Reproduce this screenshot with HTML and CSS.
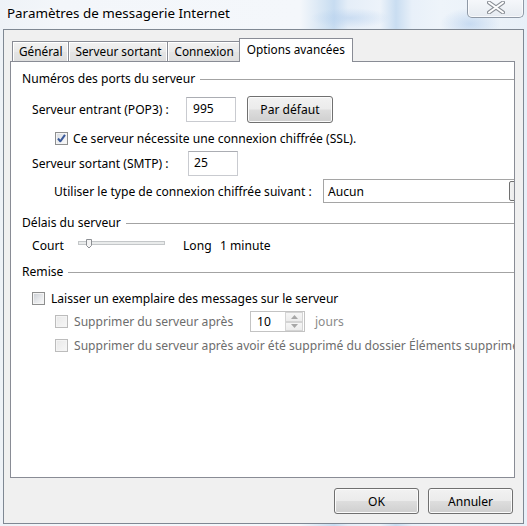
FILE: index.html
```html
<!DOCTYPE html>
<html lang="fr">
<head>
<meta charset="utf-8">
<title>Paramètres de messagerie Internet</title>
<link rel="stylesheet" href="styles.css">
</head>
<body>
<div class="window">
  <div class="titlebar">
    <span class="title">Paramètres de messagerie Internet</span>
    <div class="close">
      <svg width="18" height="13" viewBox="0 0 18 13">
        <path d="M2 1.5 L16 11.5 M16 1.5 L2 11.5" stroke="#8a8f96" stroke-width="4" stroke-linecap="round" fill="none"/>
        <path d="M2 1.5 L16 11.5 M16 1.5 L2 11.5" stroke="#ffffff" stroke-width="2" stroke-linecap="round" fill="none"/>
      </svg>
    </div>
  </div>
  <div class="dialog">
    <div class="tabs">
      <div class="tab">Général</div>
      <div class="tab">Serveur sortant</div>
      <div class="tab">Connexion</div>
      <div class="tab active">Options avancées</div>
    </div>
    <div class="panel">
      <div class="group-head"><span>Numéros des ports du serveur</span><span class="rule"></span></div>
      <div class="row row-pop">
        <span class="lbl lbl-pop">Serveur entrant (POP3) :</span>
        <span class="field field-pop">995</span>
        <span class="btn btn-default">Par défaut</span>
      </div>
      <div class="row row-ssl">
        <span class="check checked">
          <svg width="11" height="11" viewBox="0 0 11 11"><path d="M2 5.5 L4.3 8.3 L9 1.8" stroke="#3b5a9a" stroke-width="2" fill="none" stroke-linejoin="round"/></svg>
        </span>
        <span class="check-text">Ce serveur nécessite une connexion chiffrée (SSL).</span>
      </div>
      <div class="row row-smtp">
        <span class="lbl lbl-smtp">Serveur sortant (SMTP) :</span>
        <span class="field field-smtp">25</span>
      </div>
      <div class="row row-enc">
        <span class="lbl lbl-enc">Utiliser le type de connexion chiffrée suivant :</span>
        <span class="combo"><span class="combo-text">Aucun</span><span class="combo-btn"></span></span>
      </div>
      <div class="group-head head-delay"><span>Délais du serveur</span><span class="rule"></span></div>
      <div class="row row-slider">
        <span class="lbl lbl-court">Court</span>
        <svg class="slider" width="88" height="10" viewBox="0 0 88 10">
          <rect x="0.5" y="2.5" width="86" height="3" fill="#e9ebeb" stroke="#c4c7c9"/>
          <path d="M8.5 0.5 H13.5 V6.5 L11 9 L8.5 6.5 Z" fill="#f4f4f4" stroke="#8c8f93"/>
        </svg>
        <span class="lbl lbl-long">Long</span>
        <span class="lbl">1 minute</span>
      </div>
      <div class="group-head head-remise"><span>Remise</span><span class="rule"></span></div>
      <div class="row row-keep">
        <span class="check"></span>
        <span class="check-text keep-text">Laisser un exemplaire des messages sur le serveur</span>
      </div>
      <div class="row row-del1">
        <span class="check disabled"></span>
        <span class="check-text dis-text del-text">Supprimer du serveur après</span>
        <span class="spin">
          <span class="spin-text">10</span>
          <span class="spin-btns">
            <span class="spin-btn"><svg width="7" height="4" viewBox="0 0 7 4"><path d="M0 4 L3.5 0 L7 4 Z" fill="#a7a7a7"/></svg></span>
            <span class="spin-btn"><svg width="7" height="4" viewBox="0 0 7 4"><path d="M0 0 L3.5 4 L7 0 Z" fill="#a7a7a7"/></svg></span>
          </span>
        </span>
        <span class="dis-text jours">jours</span>
      </div>
      <div class="row row-del2">
        <span class="check disabled"></span>
        <span class="check-text dis-text del-text">Supprimer du serveur après avoir été supprimé du dossier Éléments supprimés</span>
      </div>
    </div>
    <div class="buttons">
      <span class="btn btn-ok">OK</span>
      <span class="btn btn-cancel">Annuler</span>
    </div>
  </div>
</div>
</body>
</html>
```
FILE: styles.css
```css
* { box-sizing: border-box; }
html, body { margin: 0; padding: 0; }
body {
  width: 527px;
  height: 526px;
  overflow: hidden;
  font-family: "Noto Sans", "Open Sans", sans-serif;
  font-size: 12.1px;
  color: #000;
  background:
    radial-gradient(ellipse 30px 16px at 470px 24px, rgba(170,200,235,0.55), rgba(170,200,235,0) 100%),
    radial-gradient(ellipse 40px 10px at 350px 18px, rgba(170,200,235,0.45), rgba(170,200,235,0) 100%),
    linear-gradient(to right,
      #eef2f7 0px, #f3f6fa 60px, #f4f7fb 300px,
      #d2e3f3 326px, #c7dcf1 334px, #e5eef8 348px,
      #edf3fa 380px, #c9ddf1 396px, #e8f0f9 412px,
      #eef4fa 440px, #e8f0f8 527px);
}
.window {
  width: 527px;
  height: 526px;
  display: flex;
  flex-direction: column;
  padding: 0 3px 2px 3px;
}
.titlebar {
  height: 29px;
  flex: none;
  display: flex;
  justify-content: space-between;
  align-items: flex-start;
}
.title {
  font-size: 13.4px;
  line-height: 18px;
  padding: 4px 0 0 4px;
  color: #000;
  text-shadow: 0 0 6px #fff, 0 0 3px #fff;
}
.close {
  width: 57px;
  height: 19px;
  margin-top: -1px;
  border: 1px solid #8f99a6;
  border-top: none;
  border-radius: 0 0 5px 5px;
  background: linear-gradient(#f6f8fb, #e6ebf1);
  box-shadow: inset 0 0 0 1px rgba(255,255,255,0.7);
  display: flex;
  align-items: center;
  justify-content: center;
  padding-bottom: 1px;
}
.dialog {
  flex: 1;
  border: 1px solid #7f8893;
  background: #f0f0f0;
  display: flex;
  flex-direction: column;
  padding: 8px 8px 0 6px;
}
.tabs {
  height: 24px;
  margin-bottom: -1px;
  padding-left: 2px;
  display: flex;
  align-items: flex-end;
  font-size: 11.8px;
}
.tab {
  height: 21px;
  padding: 0 6px;
  line-height: 19px;
  border: 1px solid #898c95;
  border-bottom: none;
  margin-left: -1px;
  background: linear-gradient(#f2f2f2, #e9e9e9 50%, #e4e4e4 51%, #dedede);
  box-shadow: inset 1px 1px 0 #fff, inset -1px 0 0 #fff;
  color: #000;
  white-space: nowrap;
}
.tab:first-child { margin-left: 0; }
.tab.active {
  height: 24px;
  line-height: 20px;
  padding: 0 7px;
  margin-left: -2px;
  background: #fff;
  box-shadow: none;
  z-index: 1;
}
.panel {
  height: 417px;
  flex: none;
  border: 1px solid #898c95;
  background: #fff;
  overflow: hidden;
  display: flex;
  flex-direction: column;
  padding: 8px 0 0 11px;
}
.group-head {
  height: 16px;
  display: flex;
  align-items: center;
  white-space: nowrap;
}
.rule {
  flex: 1;
  height: 0;
  border-top: 1px solid #a3a3a3;
  margin-left: 5px;
  margin-top: 2px;
}
.head-delay { margin-top: 11px; }
.head-remise { margin-top: 10px; }
.row {
  display: flex;
  align-items: center;
  white-space: nowrap;
  padding-left: 10px;
}
.row > * { flex: none; }
.row-pop { height: 27px; margin-top: 10px; }
.row-ssl { height: 16px; margin-top: 7px; padding-left: 33px; }
.row-smtp { height: 25px; margin-top: 5px; }
.row-enc { height: 24px; margin-top: 3px; padding-left: 32px; }
.row-slider { height: 16px; margin-top: 7px; }
.row-keep { height: 16px; margin-top: 11px; }
.row-del1 { height: 21px; margin-top: 5px; padding-left: 33px; }
.row-del2 { height: 16px; margin-top: 5px; padding-left: 33px; }

.lbl-pop { width: 154px; }
.lbl-smtp { width: 156px; }
.lbl-enc { width: 269px; }
.lbl-court { width: 46px; }
.lbl-long { width: 37px; margin-left: 17px; }

.field {
  height: 25px;
  width: 50px;
  border: 1px solid #c9cbd0;
  border-top-color: #abadb3;
  background: #fff;
  padding-left: 6px;
  line-height: 22px;
}
.field-smtp { padding-left: 5px; width: 50px; }
.btn {
  display: flex;
  align-items: center;
  justify-content: center;
  border: 1px solid #707070;
  border-radius: 3px;
  background: linear-gradient(#f2f2f2 0%, #ebebeb 48%, #dddddd 52%, #cfcfcf 100%);
  box-shadow: inset 0 0 0 1px #fbfbfb;
  color: #000;
}
.btn-default { width: 86px; height: 27px; margin-left: 11px; }
.combo {
  width: 205px;
  height: 24px;
  border: 1px solid #a5a5a5;
  background: #fff;
  display: flex;
  align-items: center;
  justify-content: space-between;
  padding: 0 1px 0 4px;
}
.combo-btn {
  width: 17px;
  height: 20px;
  border: 1px solid #707070;
  border-radius: 2px;
  background: linear-gradient(to right, #f2f2f2, #e6e6e6 50%, #d6d6d6);
}
.slider { display: block; margin-top: -2px; }
.check {
  width: 13px;
  height: 13px;
  border: 1px solid #8e8f8f;
  background: linear-gradient(135deg, #c9cdd3 0%, #e4e6e9 50%, #fafafa 100%);
  box-shadow: inset 0 0 0 1px #f4f4f4;
  display: flex;
  align-items: center;
  justify-content: center;
}
.check.checked {
  background: linear-gradient(135deg, #d6dae0 0%, #eceef0 50%, #fbfbfb 100%);
}
.check.checked svg { display: block; }
.check.disabled {
  border-color: #bcbcbc;
  background: linear-gradient(135deg, #e8e8e8, #f7f7f7);
}
.check-text { margin-left: 5px; }
.keep-text { margin-left: 6px; }
.del-text { margin-left: 6px; }
.dis-text { color: #6d6d6d; }
.row-del1 .del-text { width: 176px; }
.spin {
  width: 55px;
  height: 21px;
  border: 1px solid #c3c3c3;
  background: #fff;
  display: flex;
  align-items: center;
  justify-content: space-between;
}
.spin-text { padding-left: 6px; color: #000; }
.spin-btns {
  width: 18px;
  height: 19px;
  display: flex;
  flex-direction: column;
  margin-right: 1px;
}
.spin-btn {
  flex: 1;
  border: 1px solid #d4d4d4;
  background: linear-gradient(#f6f6f6, #ececec);
  display: flex;
  align-items: center;
  justify-content: center;
}
.spin-btn svg { display: block; }
.jours { margin-left: 10px; color: #8a8a8a; }
.buttons {
  display: flex;
  justify-content: flex-end;
  gap: 9px;
  margin-top: 10px;
  padding-right: 2px;
}
.btn-ok, .btn-cancel { width: 85px; height: 26px; }
```
